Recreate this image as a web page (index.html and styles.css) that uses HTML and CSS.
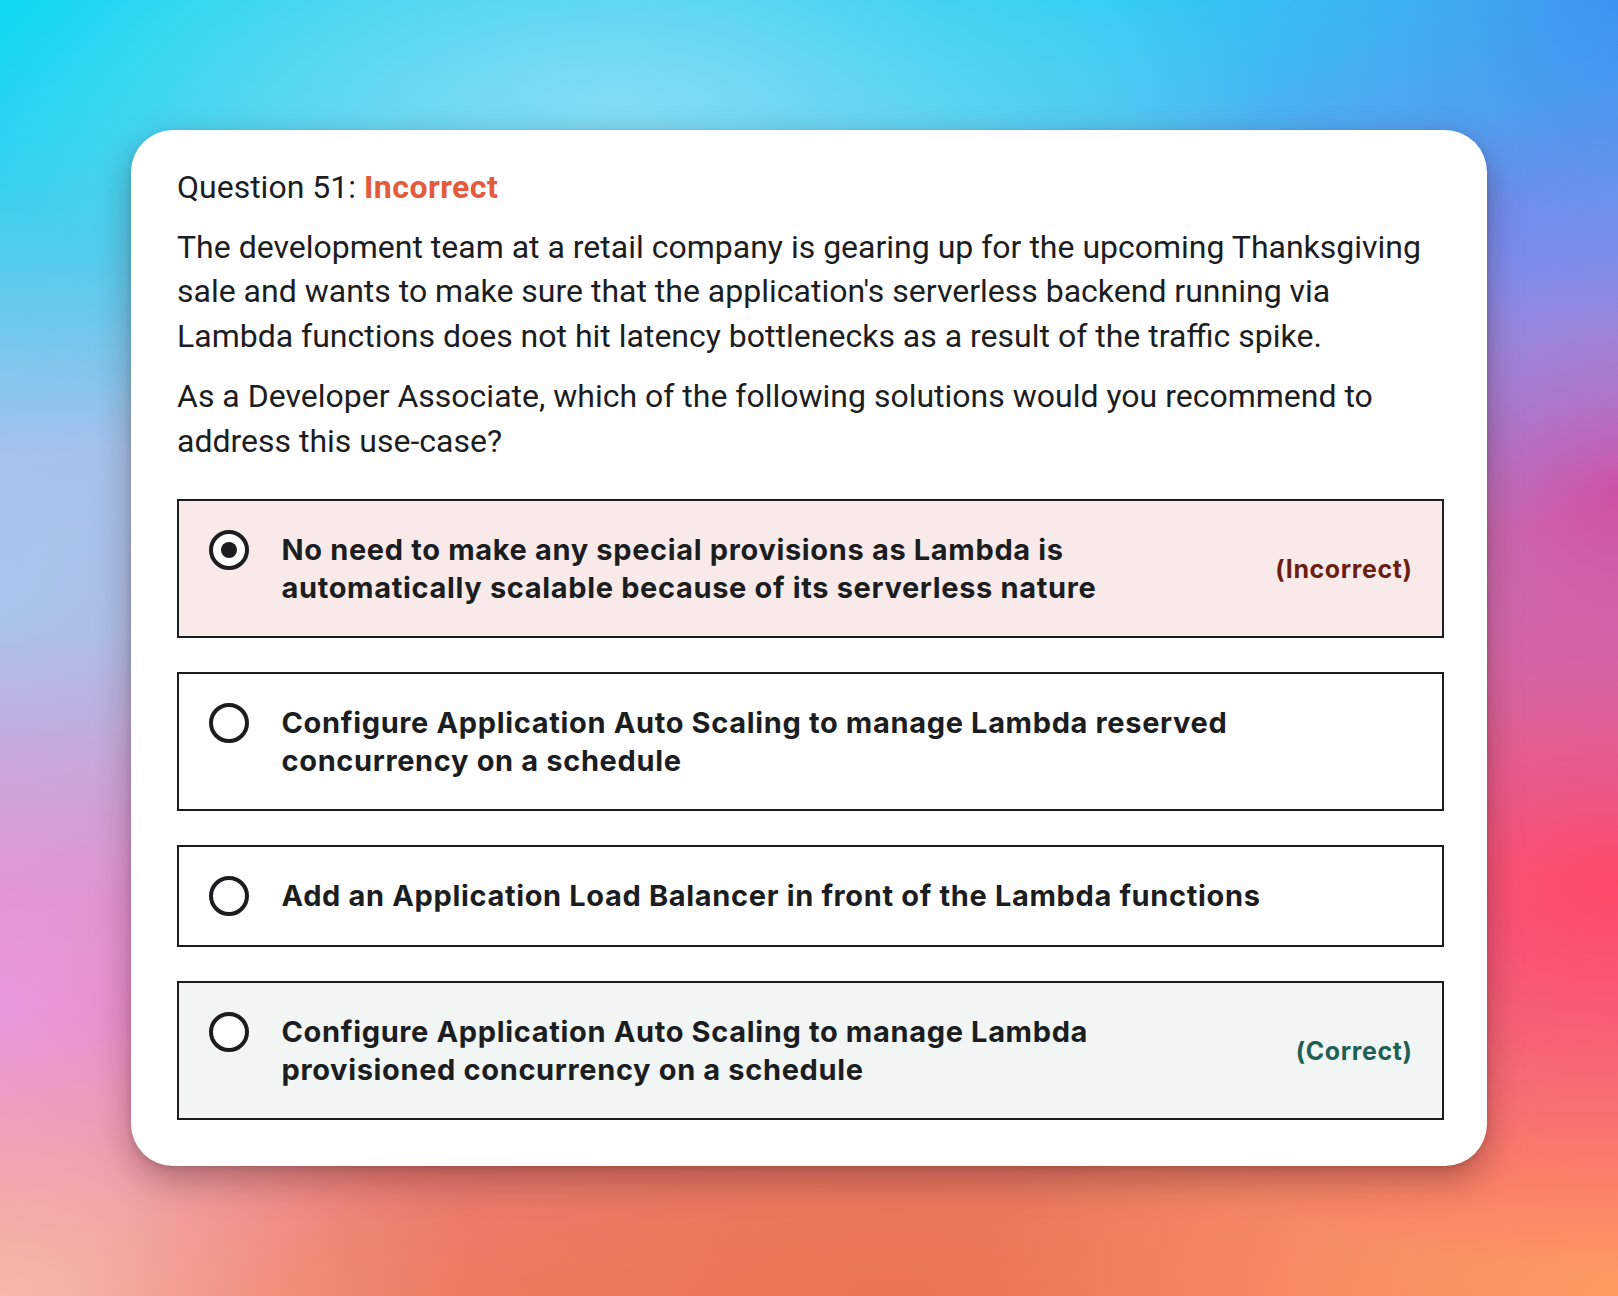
FILE: index.html
```html
<!DOCTYPE html>
<html lang="en">
<head>
<meta charset="utf-8">
<title>Question 51</title>
<link rel="stylesheet" href="styles.css">
</head>
<body>
<main class="stage">
  <section class="card">
    <h2 class="q-title">Question 51: <span class="q-status">Incorrect</span></h2>
    <p class="q-text">The development team at a retail company is gearing up for the upcoming Thanksgiving sale and wants to make sure that the application's serverless backend running via Lambda functions does not hit latency bottlenecks as a result of the traffic spike.</p>
    <p class="q-text">As a Developer Associate, which of the following solutions would you recommend to address this use-case?</p>
    <div class="options">
      <div class="option option-wrong">
        <span class="radio radio-checked"></span>
        <div class="option-text">No need to make any special provisions as Lambda is automatically scalable because of its serverless nature</div>
        <span class="verdict verdict-wrong">(Incorrect)</span>
      </div>
      <div class="option">
        <span class="radio"></span>
        <div class="option-text">Configure Application Auto Scaling to manage Lambda reserved concurrency on a schedule</div>
      </div>
      <div class="option">
        <span class="radio"></span>
        <div class="option-text">Add an Application Load Balancer in front of the Lambda functions</div>
      </div>
      <div class="option option-right">
        <span class="radio"></span>
        <div class="option-text">Configure Application Auto Scaling to manage Lambda provisioned concurrency on a schedule</div>
        <span class="verdict verdict-right">(Correct)</span>
      </div>
    </div>
  </section>
</main>
</body>
</html>
```

FILE: styles.css
```css
* { box-sizing: border-box; }

html, body {
  margin: 0;
  padding: 0;
}

body {
  width: 1618px;
  height: 1296px;
  overflow: hidden;
  font-family: Roboto, "Liberation Sans", sans-serif;
  color: #1c1d1f;
  background-color: #c0a0d0;
  background-image:
    radial-gradient(ellipse 40% 20% at 38% 8%, rgba(160, 228, 244, 0.7) 0%, rgba(160, 228, 244, 0) 100%),
    radial-gradient(ellipse 45% 35% at 0% 0%, #0fd8f0 0%, rgba(15, 216, 240, 0) 100%),
    radial-gradient(ellipse 45% 25% at 58% 0%, #22cdf2 0%, rgba(34, 205, 242, 0) 100%),
    radial-gradient(ellipse 32% 26% at 100% 0%, #3f8ef0 0%, rgba(63, 142, 240, 0) 100%),
    radial-gradient(ellipse 32% 24% at 88% 17%, #8888f0 0%, rgba(136, 136, 240, 0) 100%),
    radial-gradient(ellipse 32% 30% at 100% 38%, #d24ea2 0%, rgba(210, 78, 162, 0) 100%),
    radial-gradient(ellipse 40% 30% at 100% 68%, #ff4868 0%, rgba(255, 72, 104, 0) 100%),
    radial-gradient(ellipse 40% 28% at 100% 100%, #ff9a60 0%, rgba(255, 154, 96, 0) 100%),
    radial-gradient(ellipse 50% 25% at 55% 100%, #ea7450 0%, rgba(234, 116, 80, 0) 100%),
    radial-gradient(ellipse 30% 22% at 0% 100%, #f6b8a8 0%, rgba(246, 184, 168, 0) 100%),
    radial-gradient(ellipse 25% 30% at 0% 78%, #ea98e0 0%, rgba(234, 152, 224, 0) 100%),
    radial-gradient(ellipse 30% 35% at 0% 45%, #a8c4ec 0%, rgba(168, 196, 236, 0) 100%),
    linear-gradient(180deg, #4cc8f0 0%, #a8bce8 40%, #e07aa8 70%, #f08070 100%);
}

.stage {
  width: 1618px;
  height: 1296px;
  display: flex;
  align-items: center;
  justify-content: center;
}

.card {
  width: 1356px;
  background: #ffffff;
  border-radius: 42px;
  padding: 35px 43px 46px 46px;
  box-shadow: 0 14px 34px rgba(60, 20, 20, 0.35), 0 2px 6px rgba(0, 0, 0, 0.12);
}

.q-title {
  margin: 0 0 16px;
  font-size: 32px;
  line-height: 44px;
  font-weight: 400;
}

.q-status {
  color: #e35a3c;
  font-weight: 700;
  letter-spacing: 0.5px;
}

.q-text {
  margin: 0 0 16px;
  font-size: 32px;
  line-height: 44.4px;
  font-weight: 400;
}

.options {
  margin-top: 36px;
  display: flex;
  flex-direction: column;
  gap: 34px;
}

.option {
  display: flex;
  align-items: flex-start;
  gap: 33px;
  border: 2px solid #1c1d1f;
  padding: 29.5px;
  background: #ffffff;
}

.option-wrong { background: #f9eaea; }
.option-right { background: #f1f5f4; }

.radio {
  flex: none;
  width: 40px;
  height: 40px;
  margin-top: -1px;
  border: 4px solid #1c1d1f;
  border-radius: 50%;
  display: grid;
  place-items: center;
  background: #ffffff;
}

.radio-checked::after {
  content: "";
  width: 16px;
  height: 16px;
  border-radius: 50%;
  background: #1c1d1f;
}

.option-text {
  flex: 1 1 auto;
  max-width: 1050px;
  font-family: Inter, Roboto, sans-serif;
  font-size: 29px;
  line-height: 38px;
  font-weight: 700;
  letter-spacing: 0.65px;
}

.verdict {
  flex: none;
  align-self: center;
  margin-left: 40px;
  font-family: Inter, Roboto, sans-serif;
  font-size: 25px;
  font-weight: 700;
  line-height: 30px;
  letter-spacing: 0.6px;
}

.verdict-wrong { color: #6b1f12; }
.verdict-right { color: #1e6054; }
```
